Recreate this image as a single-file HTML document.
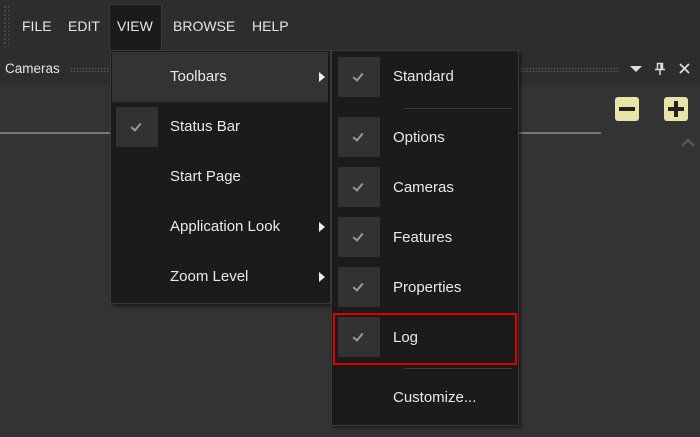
<!DOCTYPE html>
<html><head><meta charset="utf-8"><style>
*{margin:0;padding:0;box-sizing:border-box}
body{width:700px;height:437px;overflow:hidden;background:#333334;font-family:"Liberation Sans",sans-serif;color:#e8e8e8;position:relative}
.a{position:absolute}
.menubar{left:0;top:0;width:700px;height:50px;background:#2d2d30}
.mi{top:18px;font-size:14px;color:#e6e6e6}
.hdr{left:0;top:50px;width:700px;height:35px;background:#2d2d30}
.dots{height:5px;background-image:radial-gradient(#4a4a4a 40%,transparent 45%);background-size:3px 3px}
.menu{background:#1b1b1b;border:1px solid #3a3a3a;box-shadow:2px 2px 3px rgba(0,0,0,.5)}
.t{font-size:15px;color:#eaeaea}
.chk{width:42px;height:40px;background:#323233}
.chk::after{content:"";position:absolute;left:17px;top:14px;width:4px;height:8px;border:solid #9a9a9a;border-width:0 2px 2px 0;transform:rotate(40deg)}
.arr{width:0;height:0;border-top:5px solid transparent;border-bottom:5px solid transparent;border-left:6px solid #eee}
.sep{height:1px;background:#3c3c3c}
</style></head><body>
<div class="a menubar"></div>
<div class="a dots" style="left:3px;top:5px;width:6px;height:42px;background-size:4px 4px"></div>
<div class="a mi" style="left:22px">FILE</div>
<div class="a mi" style="left:68px">EDIT</div>
<div class="a" style="left:109px;top:4px;width:53px;height:48px;background:#1b1b1b;border:1px solid #3a3a3a;border-bottom:none"></div>
<div class="a mi" style="left:117px">VIEW</div>
<div class="a mi" style="left:173px">BROWSE</div>
<div class="a mi" style="left:252px">HELP</div>
<div class="a hdr"></div>
<div class="a" style="left:5px;top:61px;font-size:13.5px;color:#e6e6e6">Cameras</div>
<div class="a dots" style="left:70px;top:67px;width:42px"></div>
<div class="a dots" style="left:520px;top:67px;width:100px"></div>
<div class="a" style="left:630px;top:66px;width:0;height:0;border-left:6px solid transparent;border-right:6px solid transparent;border-top:6px solid #ddd"></div>
<svg class="a" style="left:654px;top:62px" width="12" height="14"><path d="M3.5 1.5H8.5V7.5H3.5Z M1 7.5H11 M6 7.5V13 M7 2V7" stroke="#ddd" stroke-width="1.5" fill="none"/></svg>
<svg class="a" style="left:679px;top:63px" width="11" height="11"><path d="M1 1L10 10M10 1L1 10" stroke="#ddd" stroke-width="1.8"/></svg>
<div class="a" style="left:0;top:132px;width:601px;height:2px;background:#777"></div>
<div class="a" style="left:615px;top:97px;width:24px;height:24px;background:#e8e5a8;border-radius:3px"></div>
<div class="a" style="left:619px;top:107px;width:16px;height:4px;background:#222"></div>
<div class="a" style="left:664px;top:97px;width:24px;height:24px;background:#e8e5a8;border-radius:3px"></div>
<div class="a" style="left:668px;top:107px;width:16px;height:4px;background:#222"></div>
<div class="a" style="left:674px;top:101px;width:4px;height:16px;background:#222"></div>
<svg class="a" style="left:680px;top:138px" width="16" height="10"><path d="M2 8L8 2L14 8" stroke="#555" stroke-width="2.5" fill="none"/></svg>

<div class="a menu" style="left:110px;top:50px;width:221px;height:254px"></div>
<div class="a" style="left:112px;top:52px;width:216px;height:50px;background:#333334"></div>
<div class="a t" style="left:170px;top:68px">Toolbars</div>
<div class="a arr" style="left:319px;top:72px"></div>
<div class="a chk" style="left:116px;top:107px"></div>
<div class="a t" style="left:170px;top:118px">Status Bar</div>
<div class="a t" style="left:170px;top:168px">Start Page</div>
<div class="a t" style="left:170px;top:218px">Application Look</div>
<div class="a arr" style="left:319px;top:222px"></div>
<div class="a t" style="left:170px;top:268px">Zoom Level</div>
<div class="a arr" style="left:319px;top:272px"></div>

<div class="a menu" style="left:331px;top:50px;width:188px;height:376px"></div>
<div class="a chk" style="left:338px;top:57px"></div><div class="a t" style="left:393px;top:68px">Standard</div>
<div class="a sep" style="left:404px;top:108px;width:108px"></div>
<div class="a chk" style="left:338px;top:117px"></div><div class="a t" style="left:393px;top:129px">Options</div>
<div class="a chk" style="left:338px;top:167px"></div><div class="a t" style="left:393px;top:179px">Cameras</div>
<div class="a chk" style="left:338px;top:217px"></div><div class="a t" style="left:393px;top:229px">Features</div>
<div class="a chk" style="left:338px;top:267px"></div><div class="a t" style="left:393px;top:279px">Properties</div>
<div class="a" style="left:333px;top:313px;width:184px;height:52px;border:2px solid #e00000"></div>
<div class="a chk" style="left:338px;top:317px"></div><div class="a t" style="left:393px;top:329px">Log</div>
<div class="a sep" style="left:404px;top:368px;width:108px"></div>
<div class="a t" style="left:393px;top:389px">Customize...</div>
</body></html>
